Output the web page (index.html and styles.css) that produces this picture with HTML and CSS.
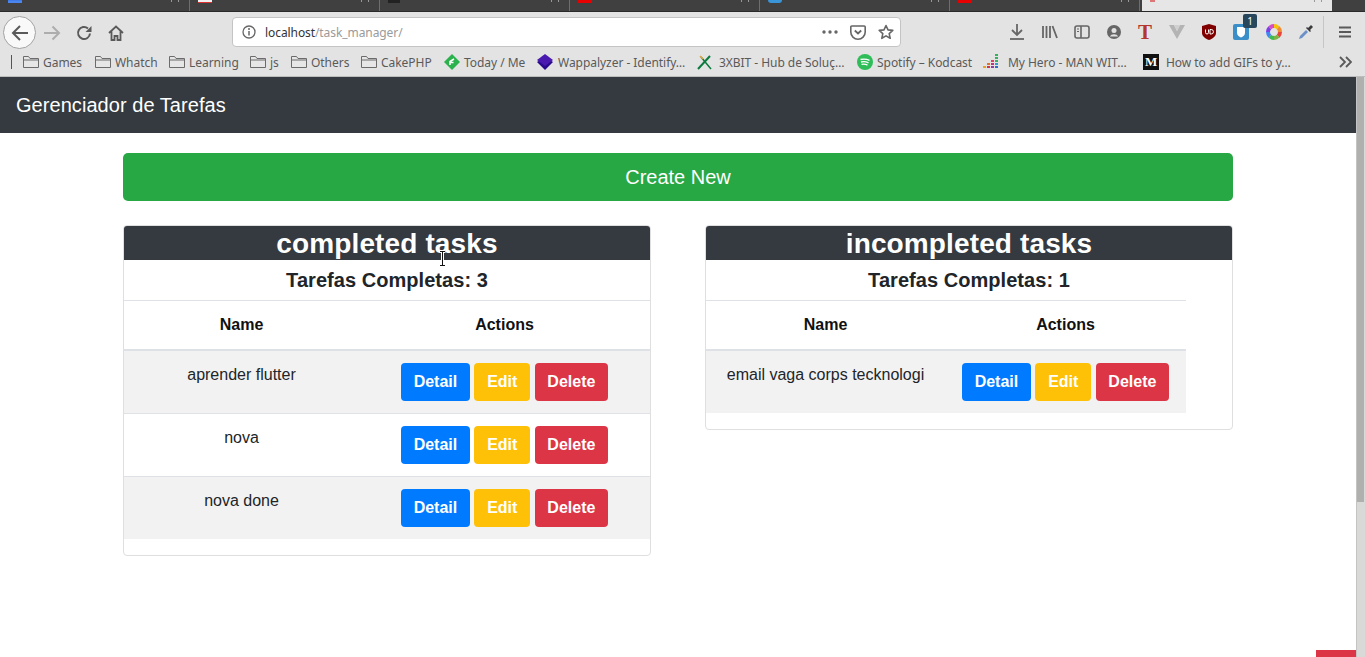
FILE: index.html
```html
<!DOCTYPE html>
<html lang="en">
    <head>
        <meta charset="UTF-8">
        <meta name="viewport" content="width=device-width, initial-scale=1.0">
        <title>Gerenciador de Tarefas</title>
        <link rel="stylesheet" href="styles.css">
    </head>

    <body>
        <div class="tabstrip">
            <div class="tab"><span class="tab-icon fav-google"></span><span class="tab-ticks"></span></div>
            <div class="tab"><span class="tab-icon fav-mail"></span><span class="tab-ticks"></span></div>
            <div class="tab"><span class="tab-icon fav-github"></span><span class="tab-ticks"></span></div>
            <div class="tab"><span class="tab-icon fav-red"></span><span class="tab-ticks"></span></div>
            <div class="tab"><span class="tab-icon fav-globe"></span><span class="tab-ticks"></span></div>
            <div class="tab"><span class="tab-icon fav-red"></span><span class="tab-ticks"></span></div>
            <div class="tab tab-active"><span class="tab-icon fav-small"></span><span class="tab-ticks"></span></div>
            <div class="tab-new"></div>
        </div>

        <div class="toolbar">
            <button class="back-btn">
                <svg width="20" height="20" viewBox="0 0 20 20"><path d="M18 10H3M10 3l-7 7 7 7" fill="none" stroke="#5a5a5a" stroke-width="2"/></svg>
            </button>
            <svg class="tool-forward" width="18" height="16" viewBox="0 0 18 16"><path d="M1 8h15M9.500 1.500 16 8l-6.500 6.500" fill="none" stroke="#adadad" stroke-width="2"/></svg>
            <svg class="tool-reload" width="16" height="16" viewBox="0 0 16 16"><path d="M14 8.500A6 6 0 1 1 12 3.500" fill="none" stroke="#5a5a5a" stroke-width="2"/><path d="M15.500 1v6h-6z" fill="#5a5a5a"/></svg>
            <svg class="tool-home" width="16" height="16" viewBox="0 0 16 16"><path d="M1 8 8 1.500 15 8M3.500 6.500V15h3v-4h3v4h3V6.500" fill="none" stroke="#5a5a5a" stroke-width="1.800"/></svg>

            <div class="urlbar">
                <svg class="url-info" width="14" height="14" viewBox="0 0 14 14"><circle cx="7" cy="7" r="6" fill="none" stroke="#666" stroke-width="1.300"/><path d="M7 6v4.500" stroke="#666" stroke-width="1.500"/><circle cx="7" cy="3.900" r="1" fill="#666"/></svg>
                <span class="url-text">localhost<span class="url-path">/task_manager/</span></span>
                <svg class="url-dots" width="16" height="4" viewBox="0 0 16 4"><circle cx="2" cy="2" r="1.700" fill="#666"/><circle cx="8" cy="2" r="1.700" fill="#666"/><circle cx="14" cy="2" r="1.700" fill="#666"/></svg>
                <svg class="url-pocket" width="16" height="15" viewBox="0 0 16 15"><path d="M1.800 1h12.400a1 1 0 0 1 1 1v5a7.200 7.200 0 0 1-14.400 0V2a1 1 0 0 1 1-1z" fill="none" stroke="#666" stroke-width="1.600"/><path d="M4.800 5.500 8 8.500l3.200-3" fill="none" stroke="#666" stroke-width="1.800"/></svg>
                <svg class="url-star" width="16" height="16" viewBox="0 0 16 16"><path d="M8 1.500l2 4.400 4.800.5-3.600 3.200 1 4.700L8 11.900l-4.200 2.400 1-4.700L1.200 6.400 6 5.900z" fill="none" stroke="#666" stroke-width="1.600" stroke-linejoin="round"/></svg>
            </div>

            <div class="tool-right">
                <svg width="14" height="16" viewBox="0 0 14 16"><path d="M7 0v10M2 6l5 5 5-5" fill="none" stroke="#666" stroke-width="1.800"/><path d="M0 15h14" stroke="#666" stroke-width="1.800"/></svg>
                <svg class="ext-library" width="16" height="14" viewBox="0 0 16 14"><path d="M1 1v12M4.500 1v12M8 1v12M10.500 1l4.500 12" fill="none" stroke="#666" stroke-width="1.800"/></svg>
                <svg width="16" height="14" viewBox="0 0 16 14"><rect x="1" y="1" width="14" height="12" rx="2" fill="none" stroke="#666" stroke-width="1.600"/><path d="M7 1v12" stroke="#666" stroke-width="1.600"/><path d="M3 4h2M3 6.500h2" stroke="#666" stroke-width="1.200"/></svg>
                <svg width="14" height="14" viewBox="0 0 14 14"><circle cx="7" cy="7" r="7" fill="#666"/><circle cx="7" cy="5.400" r="2.500" fill="#e1e1e1"/><path d="M2.800 11.500a4.500 3.400 0 0 1 8.400 0z" fill="#e1e1e1"/></svg>
                <span class="ext-t">T</span>
                <svg width="16" height="14" viewBox="0 0 16 14"><path d="M0 0h5l3 6 3-6h5L8 14z" fill="#b4b4b4"/><path d="M5 0h6L8 6z" fill="#d0d0d0"/></svg>
                <svg width="14" height="16" viewBox="0 0 14 16"><path d="M7 0l7 2v7c0 3-3 5.500-7 7-4-1.500-7-4-7-7V2z" fill="#800000"/><path d="M3.500 5.500v3a1.500 1.500 0 0 0 3 0v-3M8 5.500v4.500h1.200a2.200 2.200 0 0 0 0-4.500z" fill="none" stroke="#fff" stroke-width="1"/></svg>
                <span class="ext-bitwarden">
                    <svg width="16" height="16" viewBox="0 0 16 16"><rect width="16" height="16" rx="2" fill="#3a8fc9"/><path d="M4 3h8v6c0 2-2 3.500-4 4.500C6 12.500 4 11 4 9z" fill="#fff"/></svg>
                    <span class="ext-badge">1</span>
                </span>
                <svg class="ext-wheel" width="16" height="16" viewBox="0 0 16 16">
                    <g fill="none" stroke-width="4">
                        <path d="M8 2a6 6 0 0 1 4.200 1.800" stroke="#f4c20d"/>
                        <path d="M12.200 3.800A6 6 0 0 1 14 8" stroke="#f28b30"/>
                        <path d="M14 8a6 6 0 0 1-1.800 4.200" stroke="#e8453c"/>
                        <path d="M12.200 12.200A6 6 0 0 1 8 14" stroke="#7cb342"/>
                        <path d="M8 14a6 6 0 0 1-4.200-1.800" stroke="#3cba54"/>
                        <path d="M3.800 12.200A6 6 0 0 1 2 8" stroke="#4285f4"/>
                        <path d="M2 8a6 6 0 0 1 1.800-4.200" stroke="#7b3fe4"/>
                        <path d="M3.800 3.800A6 6 0 0 1 8 2" stroke="#d84bc3"/>
                    </g>
                </svg>
                <svg width="16" height="16" viewBox="0 0 16 16"><path d="M1 15l1-3 6-6 2 2-6 6z" fill="#6d8fc7"/><path d="M8 4l4 4 1-1-1-1 3-3-2-2-3 3-1-1z" fill="#3b3b3b"/></svg>
            </div>
            <div class="tool-sep"></div>
            <svg class="tool-menu" width="12" height="12" viewBox="0 0 12 12"><path d="M0 1.500h12M0 6h12M0 10.500h12" stroke="#5a5a5a" stroke-width="1.800"/></svg>
        </div>

        <div class="bookmarks">
            <span class="bm-sep"></span>
            <a class="bm"><svg class="folder" viewBox="0 0 16 14"><path d="M.5 12.500v-11h5l1.500 2h8.500v9z" fill="#e6e6e6" stroke="#6b6b6b"/><path d="M.5 5h15" stroke="#6b6b6b"/></svg>Games</a>
            <a class="bm"><svg class="folder" viewBox="0 0 16 14"><path d="M.5 12.500v-11h5l1.500 2h8.500v9z" fill="#e6e6e6" stroke="#6b6b6b"/><path d="M.5 5h15" stroke="#6b6b6b"/></svg>Whatch</a>
            <a class="bm"><svg class="folder" viewBox="0 0 16 14"><path d="M.5 12.500v-11h5l1.500 2h8.500v9z" fill="#e6e6e6" stroke="#6b6b6b"/><path d="M.5 5h15" stroke="#6b6b6b"/></svg>Learning</a>
            <a class="bm"><svg class="folder" viewBox="0 0 16 14"><path d="M.5 12.500v-11h5l1.500 2h8.500v9z" fill="#e6e6e6" stroke="#6b6b6b"/><path d="M.5 5h15" stroke="#6b6b6b"/></svg>js</a>
            <a class="bm"><svg class="folder" viewBox="0 0 16 14"><path d="M.5 12.500v-11h5l1.500 2h8.500v9z" fill="#e6e6e6" stroke="#6b6b6b"/><path d="M.5 5h15" stroke="#6b6b6b"/></svg>Others</a>
            <a class="bm"><svg class="folder" viewBox="0 0 16 14"><path d="M.5 12.500v-11h5l1.500 2h8.500v9z" fill="#e6e6e6" stroke="#6b6b6b"/><path d="M.5 5h15" stroke="#6b6b6b"/></svg>CakePHP</a>
            <a class="bm"><svg class="fav fav-today" viewBox="0 0 16 16"><path d="M8 0l8 8-8 8-8-8z" fill="#2bb24c"/><path d="M6 11V7.500L10 5M6 8.500h3.500" fill="none" stroke="#fff" stroke-width="1.500"/></svg>Today / Me</a>
            <a class="bm"><svg class="fav" viewBox="0 0 16 16"><path d="M8 3l8 5-8 8-8-8z" fill="#2a0a8c"/><path d="M8 0l8 6-8 6-8-6z" fill="#4a1ab0"/></svg>Wappalyzer - Identify…</a>
            <a class="bm"><svg class="fav fav-3xbit" viewBox="0 0 16 16"><path d="M1 15 13 2" stroke="#0b7a3e" stroke-width="2"/><path d="M4 3l10 12" stroke="#0b7a3e" stroke-width="1.500"/><path d="M3 2l3 3" stroke="#d9a441" stroke-width="1.500"/></svg>3XBIT - Hub de Soluç…</a>
            <a class="bm"><svg class="fav fav-today" viewBox="0 0 16 16"><circle cx="8" cy="8" r="8" fill="#2ebd59"/><path d="M3.500 5.500c3-.8 6-.6 9 .8M4 8c2.500-.6 5-.4 7.500.8M4.500 10.400c2-.4 4-.3 6 .7" fill="none" stroke="#fff" stroke-width="1.300"/></svg>Spotify – Kodcast</a>
            <a class="bm"><svg class="fav fav-deezer" viewBox="0 0 16 16"><path d="M0 12h3v2H0z" fill="#f0a020"/><path d="M4 12h3v2H4z" fill="#d8304a"/><path d="M4 9h3v2H4z" fill="#e8702a"/><path d="M8 12h3v2H8z" fill="#8e3aa0"/><path d="M8 9h3v2H8z" fill="#c03080"/><path d="M8 6h3v2H8z" fill="#e04060"/><path d="M12 12h3v2h-3z" fill="#2a6fd0"/><path d="M12 9h3v2h-3z" fill="#2a9fd0"/><path d="M12 6h3v2h-3zM12 3h3v2h-3zM12 0h3v2h-3z" fill="#38b060"/></svg>My Hero - MAN WIT…</a>
            <a class="bm"><span class="fav-m">M</span>How to add GIFs to y…</a>
            <svg class="bm-more" width="13" height="12" viewBox="0 0 13 12"><path d="M1 1l5 5-5 5M7 1l5 5-5 5" fill="none" stroke="#5a5a5a" stroke-width="1.800"/></svg>
        </div>

        <div class="viewport">
            <div class="page">
                <nav class="navbar">Gerenciador de Tarefas</nav>

                <div class="container">
                    <a class="btn-create">Create New</a>

                    <div class="task-columns">
                        <div class="card">
                            <h2 class="card-head">completed tasks</h2>
                            <h3 class="card-title">Tarefas Completas: 3</h3>
                            <table class="task-table table-full">
                                <thead>
                                    <tr>
                                        <th class="col-name">Name</th>
                                        <th>Actions</th>
                                    </tr>
                                </thead>
                                <tbody>
                                    <tr>
                                        <td>aprender flutter</td>
                                        <td><a class="btn btn-blue">Detail</a> <a class="btn btn-yellow">Edit</a> <a class="btn btn-red">Delete</a></td>
                                    </tr>
                                    <tr>
                                        <td>nova</td>
                                        <td><a class="btn btn-blue">Detail</a> <a class="btn btn-yellow">Edit</a> <a class="btn btn-red">Delete</a></td>
                                    </tr>
                                    <tr>
                                        <td>nova done</td>
                                        <td><a class="btn btn-blue">Detail</a> <a class="btn btn-yellow">Edit</a> <a class="btn btn-red">Delete</a></td>
                                    </tr>
                                </tbody>
                            </table>
                        </div>

                        <div class="card">
                            <h2 class="card-head">incompleted tasks</h2>
                            <h3 class="card-title">Tarefas Completas: 1</h3>
                            <table class="task-table table-short">
                                <thead>
                                    <tr>
                                        <th class="col-half">Name</th>
                                        <th>Actions</th>
                                    </tr>
                                </thead>
                                <tbody>
                                    <tr>
                                        <td>email vaga corps tecknologi</td>
                                        <td><a class="btn btn-blue">Detail</a> <a class="btn btn-yellow">Edit</a> <a class="btn btn-red">Delete</a></td>
                                    </tr>
                                </tbody>
                            </table>
                        </div>
                    </div>
                </div>

                <div class="corner-tab"></div>
                <svg class="text-cursor" width="9" height="17" viewBox="0 0 9 17"><path d="M1.500 1.500h6M4.500 1.500v14M1.500 15.500h6" fill="none" stroke="#fff" stroke-width="3"/><path d="M2 1.500h5M4.500 1.500v14M2 15.500h5" fill="none" stroke="#111" stroke-width="1"/></svg>
            </div>
            <div class="scrollbar"><div class="scroll-thumb"></div></div>
        </div>
    </body>
</html>
```

FILE: styles.css
```css
*{
    box-sizing: border-box;
}
html, body{
    margin: 0;
    height: 100%;
    overflow: hidden;
}
body{
    display: flex;
    flex-direction: column;
    font-family: "Liberation Sans", Arial, sans-serif;
    font-size: 16px;
    color: #212529;
    background: #fff;
}

/* browser chrome */
.tabstrip{
    display: flex;
    height: 12px;
    flex: none;
    background: #404040;
    border-bottom: 1px solid #2a2a2a;
    overflow: hidden;
}
.tab{
    width: 190px;
    height: 11px;
    flex: none;
    display: flex;
    justify-content: space-between;
    padding: 0 10px 0 8px;
    border-right: 1px solid #6e6e6e;
}
.tab-active{
    width: 190px;
    margin-left: 2px;
    background: #e6e6e6;
    border-right: none;
}
.tab-new{
    flex: 1;
}
.tab-icon{
    display: block;
    width: 14px;
    height: 3px;
}
.tab-ticks{
    width: 8px;
    height: 2px;
    border-left: 1px solid #999;
    border-right: 1px solid #999;
}
.fav-google{ background: #3f7be8; border-bottom: 2px solid #4a86ee; }
.fav-mail{ background: #f2f2f2; border-bottom: 1px solid #d33; }
.fav-github{ background: #222; width: 12px; }
.fav-red{ background: #e60000; }
.fav-globe{ background: #3a94d8; border-radius: 0 0 7px 7px; }
.fav-small{ background: #d77; width: 5px; height: 2px; }

.toolbar{
    position: relative;
    display: flex;
    align-items: center;
    height: 35px;
    flex: none;
    background: #e3e3e3;
    padding-left: 3px;
}
.back-btn{
    width: 33px;
    height: 33px;
    margin-top: 6px;
    padding: 0;
    display: flex;
    align-items: center;
    justify-content: center;
    background: #f9f9f9;
    border: 1px solid #a3a3a3;
    border-radius: 50%;
    z-index: 1;
}
.tool-forward{ margin-left: 7px; margin-top: 6px; }
.tool-reload{ margin-left: 15px; margin-top: 6px; }
.tool-home{ margin-left: 16px; margin-top: 6px; }
.urlbar{
    display: flex;
    align-items: center;
    width: 669px;
    height: 30px;
    margin-left: 108px;
    margin-top: 5px;
    padding-left: 9px;
    background: #fff;
    border: 1px solid #c4c4c4;
    border-radius: 4px;
    font-family: "Noto Sans", sans-serif;
    font-size: 12px;
    color: #333;
}
.url-text{
    margin-left: 9px;
    flex: 1;
    letter-spacing: -0.08px;
}
.url-path{
    color: #9a9a9a;
}
.url-dots{ margin-right: 12px; }
.url-pocket{ margin-right: 12px; }
.url-star{ margin-right: 6px; }
.tool-right{
    display: flex;
    align-items: center;
    margin-left: 109px;
    margin-top: 5px;
}
.tool-right > *{
    flex: none;
    margin-right: 17px;
}
.tool-right > .ext-library{
    margin-left: 1px;
    margin-right: 16px;
}
.tool-right > .ext-wheel{
    margin-right: 16px;
}
.ext-t{
    font-family: "Liberation Serif", serif;
    font-weight: bold;
    font-size: 21px;
    line-height: 18px;
    color: #b5362a;
}
.ext-bitwarden{
    position: relative;
    display: block;
    width: 16px;
    height: 16px;
}
.ext-badge{
    position: absolute;
    left: 10px;
    top: -10px;
    width: 14px;
    height: 14px;
    background: #28465c;
    color: #fff;
    border-radius: 2px;
    font-family: "Noto Sans", sans-serif;
    font-size: 10px;
    line-height: 14px;
    text-align: center;
}
.tool-sep{
    width: 1px;
    height: 32px;
    margin-top: 5px;
    margin-left: -8px;
    background: #c6c6c6;
}
.tool-menu{
    margin-left: 15px;
    margin-top: 5px;
}

.bookmarks{
    display: grid;
    grid-template-columns: 12px 72px 74px 81px 41px 70px 83px 93px 160px 160px 126px 160px 196px 1fr;
    align-items: center;
    height: 30px;
    flex: none;
    background: #e3e3e3;
    border-bottom: 1px solid #bdbdbd;
    padding-left: 11px;
    padding-top: 1px;
    font-family: "Noto Sans", sans-serif;
    font-size: 12px;
    letter-spacing: -0.04px;
    color: #5a5a5a;
    white-space: nowrap;
}
.bm-sep{
    width: 1px;
    height: 14px;
    background: #555;
}
.bm{
    display: flex;
    align-items: center;
}
.folder{
    width: 16px;
    height: 14px;
    margin-right: 4px;
}
.fav{
    width: 16px;
    height: 16px;
    margin-right: 5px;
}
.fav-today{ margin-right: 4px; }
.fav-3xbit{ margin-right: 6px; }
.fav-deezer{ margin-right: 9px; }
.fav-m{
    width: 16px;
    height: 16px;
    margin-right: 7px;
    background: #111;
    color: #fff;
    font-family: "Liberation Serif", serif;
    font-weight: bold;
    font-size: 13px;
    line-height: 16px;
    text-align: center;
}
.bm-more{
    justify-self: end;
    margin-right: 14px;
}

/* page */
.viewport{
    flex: 1;
    display: flex;
    min-height: 0;
}
.page{
    position: relative;
    flex: 1;
    min-width: 0;
    overflow: hidden;
}
.scrollbar{
    width: 9px;
    flex: none;
    background: #d9d9d7;
    border-left: 1px solid #c4c4c4;
}
.scroll-thumb{
    height: 425px;
    width: 7px;
    background: #b0b0ae;
}
.navbar{
    height: 56px;
    padding-left: 16px;
    background: #343a40;
    color: #fff;
    font-size: 20px;
    letter-spacing: .05px;
    line-height: 56px;
}
.container{
    width: 1110px;
    margin: 0 auto;
    padding-top: 20px;
}
.btn-create{
    display: block;
    height: 48px;
    background: #28a745;
    color: #fff;
    border-radius: 5px;
    font-size: 20px;
    line-height: 48px;
    text-align: center;
}
.task-columns{
    display: grid;
    grid-template-columns: 528px 528px;
    column-gap: 54px;
    align-items: start;
    margin-top: 24px;
}
.card{
    border: 1px solid #dfdfdf;
    border-radius: 4px;
    overflow: hidden;
}
.card-head{
    margin: 0;
    height: 34px;
    background: #343a40;
    color: #fff;
    font-size: 28px;
    letter-spacing: .13px;
    line-height: 36px;
    text-align: center;
}
.card-title{
    margin: 0;
    height: 40px;
    font-size: 20px;
    letter-spacing: .05px;
    line-height: 40px;
    text-align: center;
}
.task-table{
    border-collapse: collapse;
    margin-bottom: 16px;
    table-layout: fixed;
}
.table-full{ width: 526px; }
.table-short{ width: 480px; }
.col-name{ width: 235px; }
.col-half{ width: 239px; }
.task-table th{
    height: 49px;
    padding: 12px;
    border-top: 1px solid #dee2e6;
    border-bottom: 2px solid #dee2e6;
    text-align: center;
    color: #111;
}
.task-table td{
    padding: 12px;
    border-top: 1px solid #dee2e6;
    text-align: center;
    vertical-align: top;
    white-space: nowrap;
    line-height: 24px;
}
.task-table thead + tbody tr:first-child td{
    border-top: none;
}
.task-table tbody tr:nth-child(odd){
    background: #f2f2f2;
}
.btn{
    display: inline-block;
    height: 38px;
    padding: 0 12.75px;
    color: #fff;
    border-radius: 4px;
    font-weight: bold;
    line-height: 38px;
}
.btn-blue{ background: #007bff; }
.btn-yellow{ background: #ffc107; }
.btn-red{ background: #dc3545; }
.corner-tab{
    position: absolute;
    right: 0;
    bottom: 0;
    width: 40px;
    height: 7px;
    background: #dc3545;
}
.text-cursor{
    position: absolute;
    left: 438px;
    top: 173px;
}
```
